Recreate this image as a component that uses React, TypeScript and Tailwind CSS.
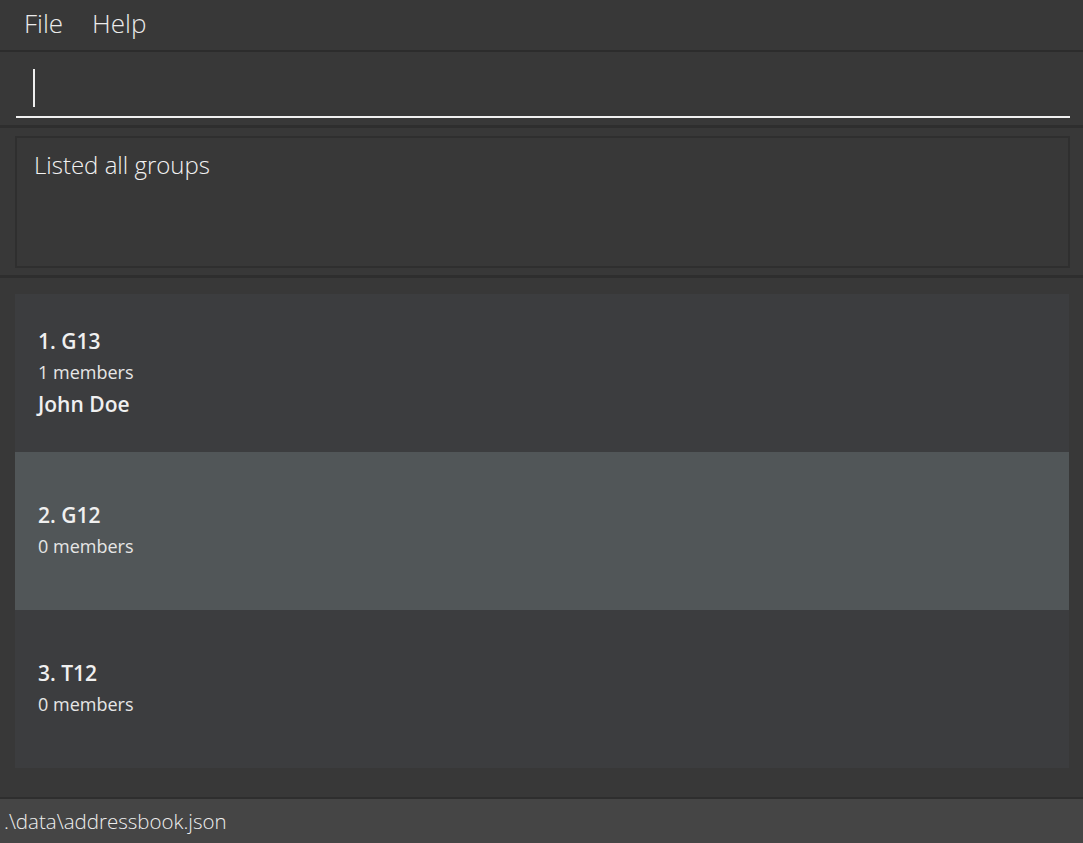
import React from "react";

const groups = [
  { name: "1. G13", count: "1 members", members: ["John Doe"], selected: false },
  { name: "2. G12", count: "0 members", members: [], selected: true },
  { name: "3. T12", count: "0 members", members: [], selected: false },
];

export default function App() {
  const font = { fontFamily: '"Open Sans", "Noto Sans", sans-serif' };
  return (
    <div className="w-[1083px] h-[843px] flex flex-col bg-[#383838] text-white overflow-hidden" style={font}>
      {/* Menu bar */}
      <div className="h-[50px] flex items-center pl-[24px] pb-[4px] gap-[29px] bg-[#383838] text-[26px] font-light text-[#ebebeb] shrink-0">
        <span>File</span>
        <span>Help</span>
      </div>
      <div className="h-[2px] bg-[#2c2c2c] shrink-0" />
      {/* Command box */}
      <div className="h-[73px] shrink-0 pl-[16px] pr-[13px] pt-[14px] pb-[7px] flex flex-col">
        <div className="flex-1 flex items-start pl-[17px] pt-[3px] border-b-2 border-[#f0f0f0]">
          <div className="w-[1.5px] h-[38px] bg-[#eeeeee]" />
        </div>
      </div>
      <div className="h-[3px] bg-[#2e2e2e] shrink-0" />
      {/* Result display */}
      <div className="h-[147px] shrink-0 pl-[15px] pr-[13px] pt-[8px] pb-[7px] flex">
        <div className="flex-1 border-2 border-[#2f2f2f] bg-[#383838] pl-[17px] pt-[9px] text-[24px] font-light text-[#f2f2f2]">
          Listed all groups
        </div>
      </div>
      <div className="h-[3px] bg-[#2e2e2e] shrink-0" />
      {/* List */}
      <div className="flex-1 pl-[15px] pr-[14px] pt-[16px] flex flex-col">
        {groups.map((g) => (
          <div
            key={g.name}
            className={`h-[158px] shrink-0 flex flex-col justify-center pl-[23px] ${g.selected ? "bg-[#515658]" : "bg-[#3c3d3f]"}`}
          >
            <div className="text-[21px] font-semibold text-[#f0f0f0] leading-[30px]">{g.name}</div>
            <div className="text-[18px] text-[#e6e6e6] leading-[32px]">{g.count}</div>
            {g.members.map((m) => (
              <div key={m} className="text-[21px] font-semibold text-[#f0f0f0] leading-[32px]">{m}</div>
            ))}
          </div>
        ))}
      </div>
      {/* Status bar */}
      <div className="h-[2px] bg-[#2e2e2e] shrink-0" />
      <div className="h-[44px] shrink-0 bg-[#454545] flex items-center pl-[4px] text-[20.5px] font-light text-[#eeeeee]">
        .\data\addressbook.json
      </div>
    </div>
  );
}
